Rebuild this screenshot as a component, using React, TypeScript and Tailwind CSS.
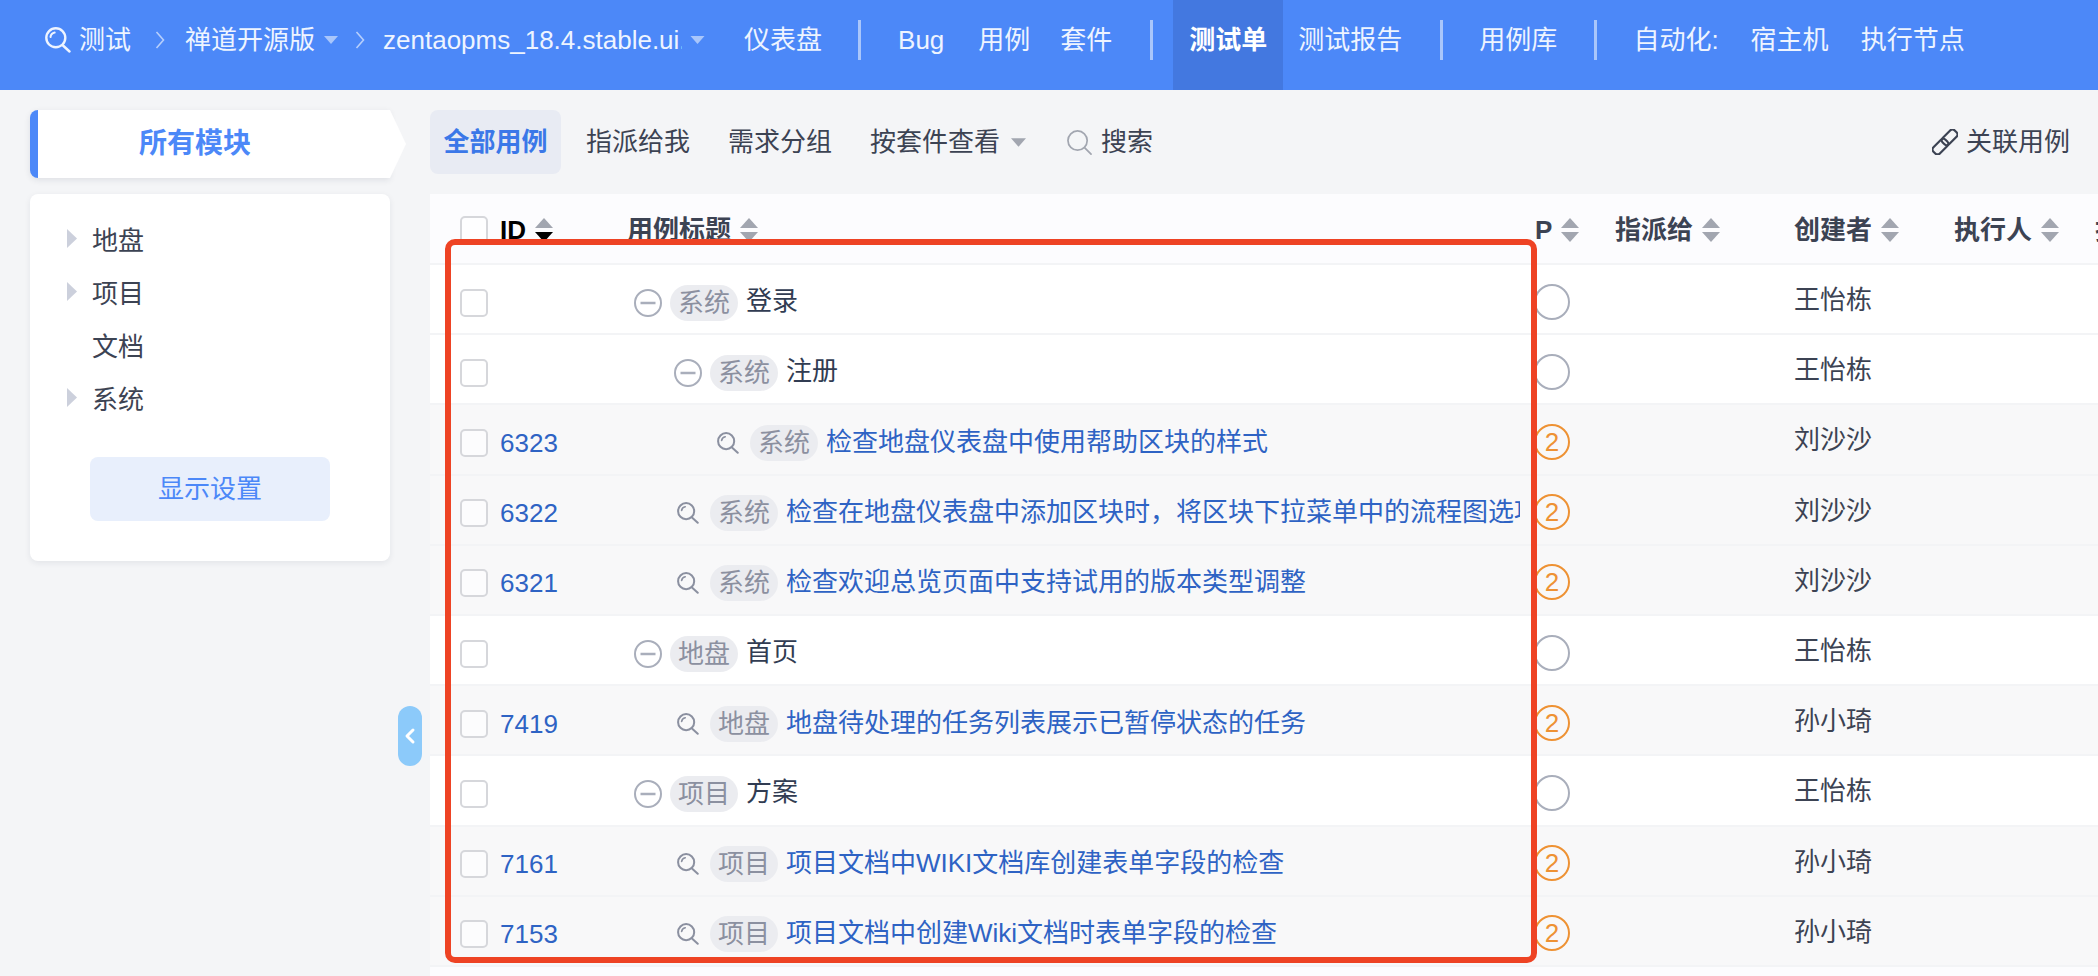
import React from "react";
import { ChevronLeft } from "lucide-react";

type Row = {
  id?: string;
  tag: string;
  title: string;
  creator: string;
  indent: string;
  group?: boolean;
};

const rows: Row[] = [
  { tag: "系统", title: "登录", creator: "王怡栋", indent: "pl-[7px]", group: true },
  { tag: "系统", title: "注册", creator: "王怡栋", indent: "pl-[47px]", group: true },
  { id: "6323", tag: "系统", title: "检查地盘仪表盘中使用帮助区块的样式", creator: "刘沙沙", indent: "pl-[90px]" },
  { id: "6322", tag: "系统", title: "检查在地盘仪表盘中添加区块时，将区块下拉菜单中的流程图选项隐藏", creator: "刘沙沙", indent: "pl-[50px]" },
  { id: "6321", tag: "系统", title: "检查欢迎总览页面中支持试用的版本类型调整", creator: "刘沙沙", indent: "pl-[50px]" },
  { tag: "地盘", title: "首页", creator: "王怡栋", indent: "pl-[7px]", group: true },
  { id: "7419", tag: "地盘", title: "地盘待处理的任务列表展示已暂停状态的任务", creator: "孙小琦", indent: "pl-[50px]" },
  { tag: "项目", title: "方案", creator: "王怡栋", indent: "pl-[7px]", group: true },
  { id: "7161", tag: "项目", title: "项目文档中WIKI文档库创建表单字段的检查", creator: "孙小琦", indent: "pl-[50px]" },
  { id: "7153", tag: "项目", title: "项目文档中创建Wiki文档时表单字段的检查", creator: "孙小琦", indent: "pl-[50px]" },
];

const gridCols = "grid grid-cols-[70px_127px_908px_80px_180px_159px_141px_1fr]";

function TestIcon({ className }: { className: string }) {
  return (
    <svg viewBox="0 0 26 26" fill="none" stroke="currentColor" strokeWidth="2.4" strokeLinecap="round" className={className}>
      <circle cx="10.8" cy="10.8" r="9.5" />
      <path d="M5.5 10a5.2 5.2 0 0 1 4.2-4.4" strokeWidth="2" />
      <path d="M18 18.5l6.5 6" />
    </svg>
  );
}

function SearchIcon({ className }: { className: string }) {
  return (
    <svg viewBox="0 0 26 26" fill="none" stroke="currentColor" strokeWidth="1.8" strokeLinecap="round" className={className}>
      <circle cx="11" cy="11" r="10" />
      <path d="M18.5 18.5l6.5 6.5" />
    </svg>
  );
}

function LinkIcon({ className }: { className: string }) {
  return (
    <svg viewBox="0 0 26 26" fill="none" stroke="currentColor" strokeWidth="2.2" className={className}>
      <g transform="rotate(-45 13 13)">
        <rect x="-2" y="8.5" width="17" height="9" rx="3.2" />
        <rect x="11" y="8.5" width="17" height="9" rx="3.2" />
      </g>
    </svg>
  );
}

function Chevron() {
  return (
    <svg viewBox="0 0 10 18" fill="none" stroke="#b7cffc" strokeWidth="1.6" className="w-[10px] h-[18px]">
      <path d="M1.5 1l7 8-7 8" />
    </svg>
  );
}

function Caret({ className }: { className: string }) {
  return (
    <svg viewBox="0 0 14 8" className={className}>
      <path d="M0 0h14L7 8z" fill="currentColor" />
    </svg>
  );
}

function Sort({ dark }: { dark?: boolean }) {
  return (
    <svg viewBox="0 0 18 24" className="w-[18px] h-[24px] ml-[9px] shrink-0">
      <path d="M9 0l9 10H0z" fill="#a2a6b0" />
      <path d="M9 24L0 14h18z" fill={dark ? "#000000" : "#a2a6b0"} />
    </svg>
  );
}

function Checkbox() {
  return <div className="w-[28px] h-[28px] rounded-[5px] border-2 border-[#d6d7db] bg-white/60 shrink-0" />;
}

function Divider({ className }: { className: string }) {
  return <div className={`w-[3px] h-[40px] mt-[20px] bg-[#a9c6fb] shrink-0 ${className}`} />;
}

function NavItem({ children, className }: { children: React.ReactNode; className: string }) {
  return <div className={`h-[80px] flex items-center shrink-0 text-[#eef4ff] whitespace-nowrap ${className}`}>{children}</div>;
}

function MinusIcon() {
  return (
    <svg viewBox="0 0 28 28" className="w-[28px] h-[28px] shrink-0" fill="none" stroke="#a9aebb" strokeWidth="2">
      <circle cx="14" cy="14" r="13" />
      <path d="M6.5 14h15" strokeWidth="2.5" />
    </svg>
  );
}

function HeaderCell({ label, dark }: { label: string; dark?: boolean }) {
  return (
    <div className={`flex items-center font-semibold ${dark ? "text-black" : "text-[#3c4353]"}`}>
      <span className="whitespace-nowrap">{label}</span>
      <Sort dark={dark} />
    </div>
  );
}

export default function App() {
  return (
    <div className="relative w-full h-[976px] overflow-hidden bg-[#f4f5f7] text-[26px] leading-[36px] text-[#3c4353] font-['Liberation_Sans','Noto_Sans_CJK_SC',sans-serif]">
      {/* top bar */}
      <header className="h-[90px] bg-[#4c88f8] flex items-start pl-[45px]">
        <NavItem className="">
          <TestIcon className="w-[26px] h-[26px] mr-[8px]" />
          测试
        </NavItem>
        <NavItem className="ml-[24px]">
          <Chevron />
        </NavItem>
        <NavItem className="ml-[20px]">
          禅道开源版
          <Caret className="w-[14px] h-[8px] ml-[9px] text-[#a9c6fb]" />
        </NavItem>
        <NavItem className="ml-[17px]">
          <Chevron />
        </NavItem>
        <NavItem className="ml-[18px]">
          <span className="w-[299px] overflow-hidden">zentaopms_18.4.stable.ui.x</span>
          <Caret className="w-[15px] h-[8px] ml-[8px] text-[#a9c6fb]" />
        </NavItem>
        <NavItem className="ml-[39px]">仪表盘</NavItem>
        <Divider className="ml-[36px]" />
        <NavItem className="ml-[37px]">Bug</NavItem>
        <NavItem className="ml-[34px]">用例</NavItem>
        <NavItem className="ml-[30px]">套件</NavItem>
        <Divider className="ml-[38px]" />
        <div className="ml-[20px] w-[110px] h-[90px] pb-[10px] bg-[#4378e0] flex items-center justify-center font-bold text-white shrink-0">
          测试单
        </div>
        <NavItem className="ml-[15px]">测试报告</NavItem>
        <Divider className="ml-[38px]" />
        <NavItem className="ml-[36px]">用例库</NavItem>
        <Divider className="ml-[37px]" />
        <NavItem className="ml-[36px]">自动化:</NavItem>
        <NavItem className="ml-[32px]">宿主机</NavItem>
        <NavItem className="ml-[32px]">执行节点</NavItem>
      </header>

      <div className="flex h-[886px]">
        {/* module tree */}
        <aside className="w-[430px] shrink-0 pl-[30px] pr-[40px] pt-[20px]">
          <div className="relative h-[68px] bg-white rounded-l-[8px] border-l-[8px] border-[#4c88f8] shadow-[0_2px_6px_rgba(30,40,70,0.1)] flex items-center justify-center pr-[38px] text-[28px] font-bold text-[#4c88f8]">
            所有模块
            <svg viewBox="0 0 16 68" className="absolute left-full top-0 w-[16px] h-[68px]">
              <path d="M0 0l16 34L0 68z" fill="#ffffff" />
            </svg>
          </div>
          <div className="mt-[16px] h-[367px] bg-white rounded-[8px] shadow-[0_2px_6px_rgba(30,40,70,0.08)] pt-[20px] pl-[37px]">
            {["地盘", "项目", "文档", "系统"].map((name) => (
              <div key={name} className="h-[53px] flex items-center">
                <div className="w-[25px] shrink-0 mb-[4px]">
                  {name !== "文档" && (
                    <svg viewBox="0 0 10 19" className="w-[10px] h-[19px]">
                      <path d="M0 0l10 9.5L0 19z" fill="#ccd0dc" />
                    </svg>
                  )}
                </div>
                <span>{name}</span>
              </div>
            ))}
            <button className="mt-[31px] ml-[23px] w-[240px] h-[64px] rounded-[8px] bg-[#e8effc] text-[#4c88f8]">显示设置</button>
          </div>
        </aside>

        <main className="flex-1 min-w-0 pt-[20px]">
          {/* toolbar */}
          <div className="h-[64px] flex items-center pr-[28px]">
            <div className="w-[131px] h-[64px] rounded-[8px] bg-[#e8ebf3] flex items-center justify-center font-bold text-[#3b78e8]">全部用例</div>
            <span className="ml-[25px]">指派给我</span>
            <span className="ml-[38px]">需求分组</span>
            <span className="ml-[38px]">按套件查看</span>
            <Caret className="w-[15px] h-[9px] ml-[11px] text-[#a2a6b0]" />
            <SearchIcon className="w-[25px] h-[25px] ml-[41px] text-[#a2a6b0]" />
            <span className="ml-[9px]">搜索</span>
            <div className="ml-auto flex items-center">
              <LinkIcon className="w-[26px] h-[26px] mr-[8px]" />
              关联用例
            </div>
          </div>

          {/* case table */}
          <div className="mt-[20px] bg-[#fcfcfe] h-[782px] overflow-hidden">
            <div className={`${gridCols} h-[71px] pt-[2px] items-center border-b-2 border-[#f3f4f6]`}>
              <div className="pl-[30px]"><Checkbox /></div>
              <HeaderCell label="ID" dark />
              <HeaderCell label="用例标题" />
              <HeaderCell label="P" />
              <HeaderCell label="指派给" />
              <div className="-ml-[1px]"><HeaderCell label="创建者" /></div>
              <HeaderCell label="执行人" />
              <HeaderCell label="执行结果" />
            </div>
            {rows.map((r, i) => (
              <div
                key={i}
                className={`${gridCols} h-[70.2px] items-center pt-[7px] border-b-2 border-[#f3f4f6] ${r.group ? "bg-white" : "bg-[#f8f8f9]"}`}
              >
                <div className="pl-[30px]"><Checkbox /></div>
                <div className="text-[#2e63c4]">{r.id}</div>
                <div className={`w-[893px] flex items-center overflow-hidden whitespace-nowrap ${r.indent}`}>
                  {r.group ? <MinusIcon /> : <TestIcon className="w-[22px] h-[22px] shrink-0 text-[#8b90a0] mr-[5px]" />}
                  <span className={`h-[36px] w-[68px] rounded-[18px] bg-[#ebecf0] text-[#8b90a0] flex items-center justify-center shrink-0 ${r.group ? "ml-[8px]" : "ml-[6px]"}`}>
                    {r.tag}
                  </span>
                  {r.group ? (
                    <span className="ml-[8px] mb-[3px] text-[#313c52]">{r.title}</span>
                  ) : (
                    <span className="ml-[8px] mb-[2px] text-[#2e63c4]">{r.title}</span>
                  )}
                </div>
                <div className="mb-[2px]">
                  {r.group ? (
                    <div className="ml-[-1px] w-[36px] h-[36px] rounded-full border-2 border-[#a9aebb]" />
                  ) : (
                    <div className="ml-[-1px] w-[36px] h-[36px] rounded-full border-2 border-[#ee9234] text-[#ee9234] flex items-center justify-center">2</div>
                  )}
                </div>
                <div />
                <div className="-ml-[1px] mb-[5px] whitespace-nowrap">{r.creator}</div>
                <div />
                <div />
              </div>
            ))}
          </div>
        </main>
      </div>

      {/* collapse handle */}
      <div className="absolute left-[398px] top-[706px] w-[24px] h-[60px] rounded-[12px] bg-[#8ccafa] flex items-center justify-center">
        <ChevronLeft className="w-[24px] h-[24px] text-white shrink-0" strokeWidth={3} />
      </div>

      {/* red annotation frame */}
      <div className="absolute left-[445px] top-[239px] w-[1092px] h-[724px] rounded-[10px] border-[6px] border-[#ee4324] pointer-events-none" />
    </div>
  );
}
